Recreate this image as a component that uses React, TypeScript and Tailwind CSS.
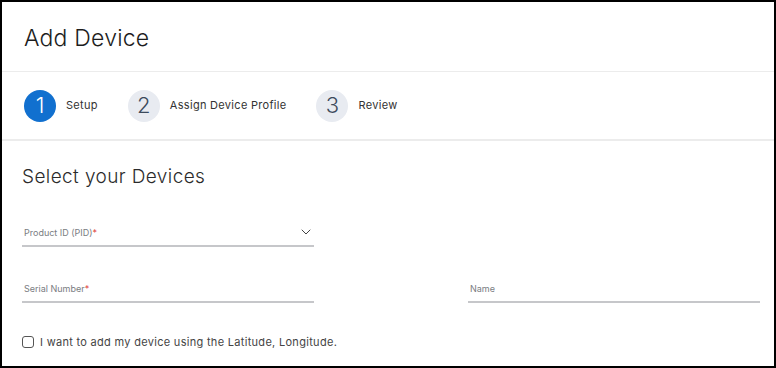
import { ChevronDown } from "lucide-react";

const font = { fontFamily: "Inter, 'Open Sans', sans-serif" };

function Step({ n, label, active }: { n: number; label: string; active?: boolean }) {
  return (
    <div className="flex items-center gap-[10px]">
      <div
        className={
          active
            ? "w-8 h-8 rounded-full bg-[#1170cf] text-white flex items-center justify-center text-[22px] font-light"
            : "w-8 h-8 rounded-full bg-[#e8ebf1] text-[#3c4a5c] flex items-center justify-center text-[22px] font-light"
        }
      >
        {n}
      </div>
      <span className="text-[11px] text-[#333] tracking-[0.3px]">{label}</span>
    </div>
  );
}

function Field({ label, required, select, className }: { label: string; required?: boolean; select?: boolean; className?: string }) {
  return (
    <div className={`flex items-end justify-between h-[30px] pb-[5px] border-b-2 border-[#c6c7ca] ${className ?? ""}`}>
      <span className="text-[9px] text-[#7a7d82] pl-[2px]">
        {label}
        {required && <span className="text-[#e0403a]">*</span>}
      </span>
      {select && <ChevronDown className="w-4 h-4 text-[#444] stroke-[1.5]" />}
    </div>
  );
}

export default function App() {
  return (
    <div className="w-[776px] h-[368px] border-2 border-black bg-white overflow-hidden" style={font}>
      <div className="h-[70px] flex items-center px-[22px] border-b border-[#ececec]">
        <h1 className="text-[23px] font-light text-[#1d1d1d] tracking-[0.2px] pt-[4px]">Add Device</h1>
      </div>
      <div className="h-[69px] flex items-center gap-[30px] px-[22px] border-b-2 border-[#ececec]">
        <Step n={1} label="Setup" active />
        <Step n={2} label="Assign Device Profile" />
        <Step n={3} label="Review" />
      </div>
      <div className="pl-[20px] pr-[14px] pt-[22px]">
        <h2 className="text-[19px] font-light text-[#2b2b2b] tracking-[0.4px]">Select your Devices</h2>
        <Field label="Product ID (PID)" required select className="w-[292px] mt-[25px]" />
        <div className="flex justify-between mt-[26px]">
          <Field label="Serial Number" required className="w-[292px]" />
          <Field label="Name" className="w-[292px]" />
        </div>
        <label className="flex items-center gap-[6px] mt-[31px]">
          <span className="w-[12px] h-[12px] border border-[#555] rounded-[3px] bg-white" />
          <span className="text-[11px] text-[#444] tracking-[0.3px]">I want to add my device using the Latitude, Longitude.</span>
        </label>
      </div>
    </div>
  );
}
